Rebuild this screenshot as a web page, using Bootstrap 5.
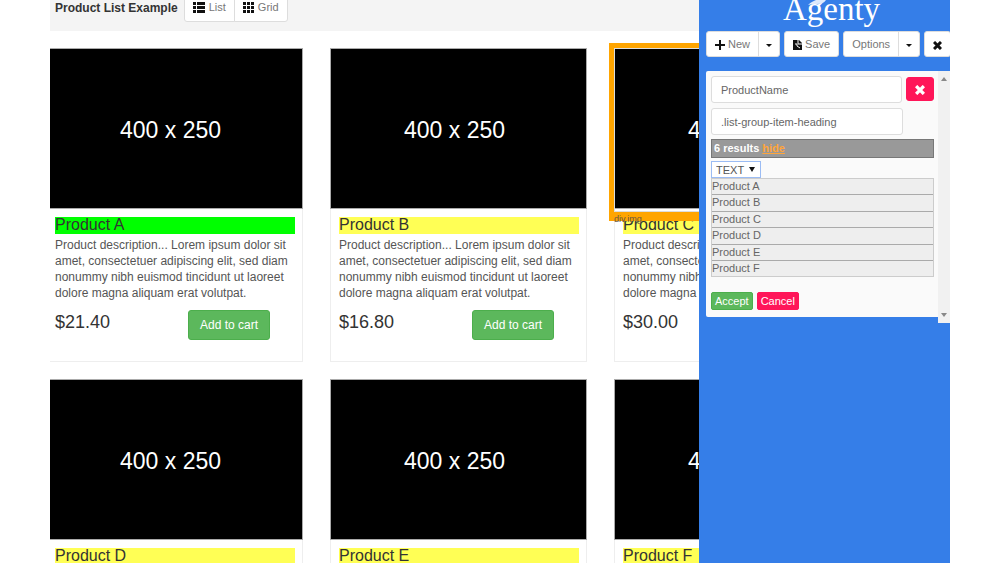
<!DOCTYPE html>
<html lang="en">
<head>
<meta charset="utf-8">
<meta name="viewport" content="width=device-width, initial-scale=1">
<title>Product List Example</title>
<link rel="stylesheet" href="https://cdn.jsdelivr.net/npm/bootstrap@5.3.0/dist/css/bootstrap.min.css">
<style>
body { font-family: "Liberation Sans", Arial, sans-serif; font-size: 12px; line-height: 16px; color: #333; background: #fff; }
.stage { padding: 0 5%; height: 100vh; overflow: hidden; }
.topbar { background: #f4f4f4; height: 31px; padding-left: 5px; gap: 6px; }
.topbar h1 { font-size: 12px; line-height: 16px; font-weight: 700; }
.btn { --bs-btn-line-height: 16px; --bs-btn-border-radius: 3px; --bs-btn-font-size: 11px; }
.btn-plain { --bs-btn-bg: #fff; --bs-btn-color: #777; --bs-btn-border-color: #ddd; --bs-btn-hover-bg: #eee; }
.view-btn { padding: 5px 8px; height: 30px; margin-top: -8px; }
.shop { overflow: hidden; }
.products { display: grid; grid-template-columns: repeat(3, 257px); gap: 17px 27px; margin: 17px 0 0 -4px; }
.product { border: 1px solid #eee; height: 314px; position: relative; }
.photo { background: #000; color: #fff; height: 161px; border: 1px solid #aaa; margin: -1px -1px 0; font-size: 23px; }
.photo span { padding-top: 2px; padding-right: 8px; }
.info { padding: 8px 7px 0 8px; }
.info h2 { font-size: 16px; line-height: 16px; padding-bottom: 1px; background: #ffff55; margin-bottom: 3px; }
.info h2.picked { background: #00ff00; }
.info p { color: #555; margin-bottom: 9px; }
.price { font-size: 18px; line-height: 24px; width: 133px; }
.btn-cart { --bs-btn-bg: #5cb85c; --bs-btn-border-color: #4cae4c; --bs-btn-color: #fff; --bs-btn-font-size: 12px; padding: 6px 11px; }
.target { position: absolute; inset: -6px -6px auto -6px; height: 178px; border: 5px solid #ffa500; border-bottom-width: 9px; box-shadow: inset 0 0 0 1px #ddd; }
.target small { position: absolute; left: 0; bottom: -12px; font-size: 9px; line-height: 10px; color: #654; }
.tool { width: 251px; background: #357ee8; color: #666; }
.logo { color: #fff; height: 31px; font-family: "Liberation Serif", serif; font-size: 33px; line-height: 18px; padding-left: 14px; }
.feather { position: absolute; left: 109px; top: 0; }
.actions { gap: 4px; padding-left: 7px; overflow: hidden; }
.actions .btn { height: 26px; padding: 4px 8px; white-space: nowrap; }
.actions .btn-caret { padding: 4px 7px; }
.caret { display: inline-block; border: 3px solid transparent; border-top-color: #111; border-bottom: 0; vertical-align: middle; }
.panel { margin: 14px 0 0 7px; }
.editor { background: #fafafa; padding: 5px 4px 7px 5px; min-width: 0; margin-bottom: 6px; border-radius: 2px 0 0 2px; }
.field-row { gap: 4px; margin-bottom: 5px; }
.editor .form-control { height: 27px; font-size: 11px; line-height: 16px; padding: 4px 9px; color: #666; border: 1px solid #ddd; border-radius: 3px; width: 192px; }
.btn-red { --bs-btn-bg: #ff1659; --bs-btn-color: #fff; --bs-btn-border-color: #ff1659; }
.btn-remove { width: 28px; height: 24px; padding: 0; margin-top: 1px; }
.results { background: #999; color: #fff; border: 1px solid #777; font-size: 11px; font-weight: 700; line-height: 17px; padding-left: 2px; margin: 4px 0 3px; }
.results a { color: #ffa53a; }
.editor select { appearance: none; border: 1px solid #9bbcf4; background: #fff; font-size: 11px; line-height: 14px; height: 17px; width: 50px; padding: 0 4px; color: #555; border-radius: 0; display: block; }
.pick { width: 50px; }
.pick .caret { position: absolute; right: 6px; top: 6px; border-width: 5px 3px 0; pointer-events: none; }
.matches { background: #eee; border: 1px solid #ccc; font-size: 11px; margin-bottom: 15px; }
.matches li + li { border-top: 1px solid #aaa; }
.matches li { line-height: 15px; }
.matches li:nth-child(even) { padding-bottom: 1px; }
.matches li:last-child { padding-bottom: 0; }
.editor .btn-tiny { font-size: 11px; line-height: 16px; padding: 0 3px; height: 18px; border-radius: 2px; }
.track { width: 12px; background: #f1f1f1; padding: 6px 0; }
</style>
</head>
<body>
<div class="stage d-flex">
  <main class="shop flex-grow-1">
    <header class="topbar d-flex align-items-start">
      <h1 class="m-0">Product List Example</h1>
      <div class="btn-group">
        <button type="button" class="btn btn-plain view-btn d-flex align-items-center gap-1"><svg width="12" height="11" viewBox="0 0 12 11" fill="#111"><path d="M0 0h3v3H0zM4 0h8v3H4zM0 4h3v3H0zM4 4h8v3H4zM0 8h3v3H0zM4 8h8v3H4z"/></svg>List</button>
        <button type="button" class="btn btn-plain view-btn d-flex align-items-center gap-1"><svg width="11" height="11" viewBox="0 0 11 11" fill="#111"><path d="M0 0h3v3H0zM4 0h3v3H4zM8 0h3v3H8zM0 4h3v3H0zM4 4h3v3H4zM8 4h3v3H8zM0 8h3v3H0zM4 8h3v3H4zM8 8h3v3H8z"/></svg>Grid</button>
      </div>
    </header>
    <div class="products" id="products"></div>
  </main>
  <aside class="tool flex-shrink-0">
    <div class="logo text-center position-relative">Agenty<svg class="feather" width="18" height="5" viewBox="0 0 18 5" fill="#dce9fc"><path d="M0 5C3 2 6 1 8 0h10c-2 3-5 4-9 4C6 4 3 4 0 5z"/></svg></div>
    <div class="actions d-flex">
      <div class="btn-group flex-shrink-0">
        <button type="button" class="btn btn-plain"><svg width="10" height="10" viewBox="0 0 10 10" fill="#111"><path d="M4 0h2v4h4v2H6v4H4V6H0V4h4z"/></svg> New</button>
        <button type="button" class="btn btn-plain btn-caret" aria-label="New options"><span class="caret"></span></button>
      </div>
      <button type="button" class="btn btn-plain flex-shrink-0"><svg width="9" height="10" viewBox="0 0 9 10"><path fill="#111" d="M0 0h6l3 3v7H0z"/><path fill="none" stroke="#fff" d="M5 0v4h4M2 4h2v2l3 2"/></svg> Save</button>
      <div class="btn-group flex-shrink-0">
        <button type="button" class="btn btn-plain">Options</button>
        <button type="button" class="btn btn-plain btn-caret" aria-label="More options"><span class="caret"></span></button>
      </div>
      <button type="button" class="btn btn-plain flex-shrink-0" aria-label="Close"><svg width="9" height="9" viewBox="0 0 9 9" stroke="#111" stroke-width="3"><path d="M1 1l7 7M8 1L1 8"/></svg></button>
    </div>
    <div class="panel d-flex">
      <div class="editor flex-grow-1">
        <div class="field-row d-flex">
          <input class="form-control" aria-label="Field name" value="ProductName">
          <button type="button" class="btn btn-red btn-remove" aria-label="Remove field"><svg width="10" height="10" viewBox="0 0 9 9" stroke="#fff" stroke-width="3"><path d="M1 1l7 7M8 1L1 8"/></svg></button>
        </div>
        <input class="form-control" aria-label="Selector" value=".list-group-item-heading">
        <div class="results">6 results <a href="#">hide</a></div>
        <div class="pick position-relative"><select aria-label="Extract"><option>TEXT</option></select><span class="caret"></span></div>
        <ul class="matches list-unstyled"><li>Product A</li><li>Product B</li><li>Product C</li><li>Product D</li><li>Product E</li><li>Product F</li></ul>
        <div class="d-flex gap-1">
          <button type="button" class="btn btn-cart btn-tiny">Accept</button>
          <button type="button" class="btn btn-red btn-tiny">Cancel</button>
        </div>
      </div>
      <div class="track d-flex flex-column justify-content-between align-items-center">
        <svg width="6" height="4" viewBox="0 0 6 4" fill="#888"><path d="M0 4l3-4 3 4z"/></svg>
        <svg width="6" height="4" viewBox="0 0 6 4" fill="#888"><path d="M0 0l3 4 3-4z"/></svg>
      </div>
    </div>
  </aside>
</div>
<script src="https://cdn.jsdelivr.net/npm/bootstrap@5.3.0/dist/js/bootstrap.bundle.min.js"></script>
<script>
const items = [["A", "$21.40"], ["B", "$16.80"], ["C", "$30.00"], ["D", "$21.40"], ["E", "$16.80"], ["F", "$30.00"]];
document.getElementById("products").innerHTML = items.map(([n, price]) => `
  <article class="product">
    <div class="photo d-flex align-items-center justify-content-center"><span>400 x 250</span></div>
    <div class="info">
      <h2 class="${n === "A" ? "picked" : ""}">Product ${n}</h2>
      <p>Product description... Lorem ipsum dolor sit amet, consectetuer adipiscing elit, sed diam nonummy nibh euismod tincidunt ut laoreet dolore magna aliquam erat volutpat.</p>
      <div class="d-flex align-items-start"><span class="price">${price}</span><button type="button" class="btn btn-cart">Add to cart</button></div>
    </div>
    ${n === "C" ? '<div class="target"><small>div.img</small></div>' : ""}
  </article>`).join("");
</script>
</body>
</html>
